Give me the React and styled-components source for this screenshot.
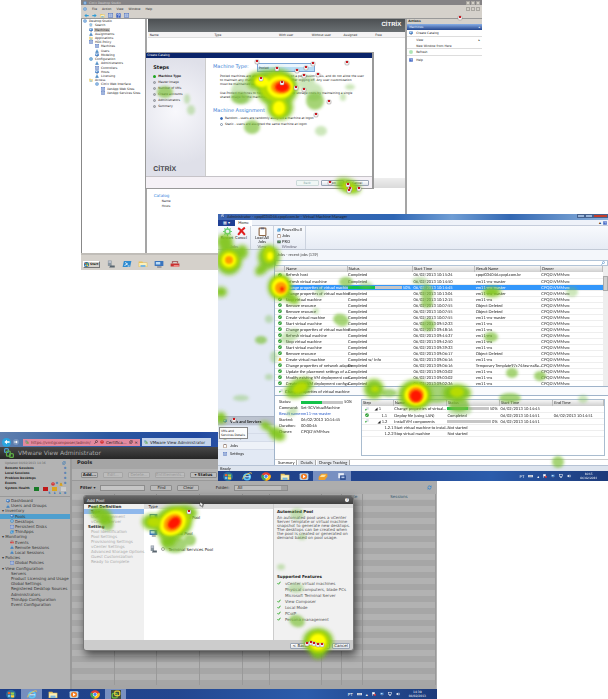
import React from 'react';
import styled, { createGlobalStyle, css } from 'styled-components';

const GlobalStyle = createGlobalStyle`
  *, *::before, *::after { box-sizing: border-box; }
  body { margin: 0; background: #fff; text-rendering: geometricPrecision; }
  button, input, select { font: inherit; color: inherit; margin: 0; padding: 0; border: 0; background: none; min-width: 0; }
  ul { list-style: none; margin: 0; padding: 0; }
  a { color: inherit; text-decoration: none; }
  h2, h3, p { margin: 0; font: inherit; }
  svg { display: block; flex: none; }
`;

/* ---------- board ---------- */
const Board = styled.main`
  display: grid;
  grid-template-columns: 81fr 137fr 219fr 45fr 126fr;
  grid-template-rows: 214px 56px 162px 49px auto;
  min-height: 100vh;
`;
const Shot = styled.section`
  position: relative;
  display: flex;
  flex-direction: column;
  min-width: 0;
  overflow: hidden;
  white-space: nowrap;
  grid-area: ${(p) => p.$area};
  z-index: ${(p) => p.$z};
  font: ${(p) => p.$font};
  color: #222;
`;
const Spacer = styled.span`flex: 1;`;

/* ---------- small drawings ---------- */
const shapes = {
  orb: <><circle cx="8" cy="8" r="8" fill="#2a6f9c" /><path d="M3 4q2-1 4 0v3.500q-2-1-4 0z" fill="#f0622b" /><path d="M8 4q3 1 5 0v4q-2 1-5 0z" fill="#9bd14b" /><path d="M3 9q2-1 4 0v4q-2-1-4 0z" fill="#6fc1f5" /><path d="M8 9q3 1 5 0v4q-2 1-5 0z" fill="#ffd23c" /></>,
  ie: <><circle cx="8" cy="8.500" r="5" fill="none" stroke="#5cc3f4" strokeWidth="3" /><path d="M4 8.500h9" stroke="#c7ecff" strokeWidth="2" /><path d="M1 13Q0 9 8 4t7-1" fill="none" stroke="#f3c845" strokeWidth="1.500" /></>,
  folder: <><path d="M1 3h6l1 2h7v9H1z" fill="#e8c25c" /><path d="M2 6h12v7H2z" fill="#fbf0bb" /><path d="M4 10h8v4H4z" fill="#79b7de" /></>,
  media: <><rect x="1" y="2" width="14" height="12" rx="2" fill="#b8d4e8" /><circle cx="8" cy="8" r="5" fill="#f07b22" /><path d="M6.500 5l4 3-4 3z" fill="#fff" /></>,
  chrome: <><circle cx="8" cy="8" r="7.500" fill="#e13d31" /><path d="M8 8L1.500 4.500A7.500 7.500 0 008 15.500z" fill="#3aa757" /><path d="M8 8l-1 7.500A7.500 7.500 0 0015 5z" fill="#fbc116" /><circle cx="8" cy="8" r="3.500" fill="#fff" /><circle cx="8" cy="8" r="2.600" fill="#4285f4" /></>,
  tray: <><path d="M1 9l4-6h10v5l-4 6H1z" fill="#f0a02b" /><path d="M3 9l3-4h7l-3 4z" fill="#ffe29a" /></>,
  vmm: <><rect x="2" y="2" width="9" height="9" fill="#e8edf7" /><rect x="5" y="6" width="9" height="8" fill="#2a4b8f" /><rect x="7" y="8" width="5" height="3" fill="#b5c7ea" /></>,
  vm: <><rect x="0" y="0" width="16" height="16" fill="#3f4d3f" /><rect x="2" y="6" width="8" height="8" rx="2" fill="none" stroke="#6cc044" strokeWidth="2" /><rect x="6" y="2" width="8" height="8" rx="2" fill="none" stroke="#e3c93a" strokeWidth="2" /></>,
  logo: <><rect x="1" y="1" width="6" height="6" rx="1.500" fill="none" stroke="#4d9ad0" strokeWidth="2" /><rect x="4" y="5" width="6" height="8" rx="1.500" fill="none" stroke="#5dab46" strokeWidth="2" /><rect x="9" y="9" width="6" height="6" rx="1.500" fill="none" stroke="#5dab46" strokeWidth="2" /></>,
  server: <><path d="M3 1h6v11H3z" fill="#8b97a0" /><path d="M4 3h4M4 5h4" stroke="#dde" /><path d="M7 11h7v4H5z" fill="#59656e" /></>,
  shell: <><path d="M3 2h12l-2 12H1z" fill="#2f8bd0" /><path d="M5 5l4 3-5 3M9 12h3" fill="none" stroke="#fff" strokeWidth="1.500" /></>,
  screen: <><rect x="1" y="2" width="14" height="10" rx="1" fill="#3a74bd" /><rect x="3" y="4" width="7" height="5" fill="#bcdcf7" /><path d="M5 14h7" stroke="#667" strokeWidth="2" /></>,
  redbox: <><path d="M1 7h14v6H1z" fill="#c93030" /><path d="M4 7V3h8v4" fill="none" stroke="#a66" strokeWidth="2" /><path d="M6 10h8v4H6z" fill="#ea8a84" /></>,
  globe: <><circle cx="8" cy="8" r="7" fill="#4a88cc" /><path d="M3 5q5 4 10 0M3 11q5-4 10 0M8 1v14" fill="none" stroke="#d5eaf9" strokeWidth="1.500" /></>,
  search: <><path d="M3 1h9v13H3z" fill="#e9f2fa" stroke="#9ab" /><circle cx="7" cy="7" r="4" fill="#b8def5" stroke="#5a9bc9" strokeWidth="2" /></>,
  user: <><circle cx="8" cy="5" r="3.500" fill="#6ba7db" /><path d="M1 15q0-7 7-7t7 7z" fill="#3c7dbb" /></>,
  list: <><rect x="1" y="1" width="14" height="13" fill="#d8e4f6" stroke="#5575bd" strokeWidth="2" /><path d="M4 5h8M4 8h8M4 11h8" stroke="#5575bd" strokeWidth="1.500" /></>,
  disc: <><circle cx="8" cy="8" r="7" fill="#3d88c4" /><circle cx="8" cy="8" r="3" fill="#e7f4ff" /></>,
  ok: <><circle cx="8" cy="8" r="7.500" fill="#249a2c" /><path d="M4 8l3 3 5-6" fill="none" stroke="#fff" strokeWidth="2.500" /></>,
  warn: <><path d="M8 1l7.500 14H.5z" fill="#f0b51e" /><path d="M8 5v5M8 12v2" stroke="#5a3a00" strokeWidth="2" /></>,
  run: <><rect x="5" y="1" width="10" height="10" fill="#d8dee6" /><path d="M1 7l8 4-8 4z" fill="#35a83c" /></>,
  gear: <><circle cx="8" cy="8" r="4.500" fill="none" stroke="#6fd07a" strokeWidth="2.500" /><path d="M8 0v4M8 12v4M0 8h4M12 8h4M2.500 2.500l2.500 2.500M11 11l2.500 2.500M13.500 2.500L11 5M5 11l-2.500 2.500" stroke="#6fd07a" strokeWidth="2" /></>,
  cross: <path d="M2 2q5 3 12 12M14 1Q8 5 2 14" fill="none" stroke="#df1f1f" strokeWidth="3.500" />,
  clip: <><rect x="2" y="2" width="12" height="13" rx="1" fill="#fff" stroke="#8d6748" strokeWidth="2" /><path d="M5 1h6v3H5z" fill="#667" /></>,
  pro: <><rect x="1" y="2" width="14" height="11" fill="#40604d" /><path d="M3 8h4l2-3 4 5" fill="none" stroke="#8fe09a" strokeWidth="2" /></>,
  help: <><rect x="1" y="1" width="14" height="14" rx="1" fill="#3d63c4" /><path d="M5 6q0-3 3-3t3 3-3 3v1M8 12v2" fill="none" stroke="#fff" strokeWidth="2" /></>,
  refresh: <><path d="M3 9a5 5 0 019-4M13 7a5 5 0 01-9 4" fill="none" stroke="currentColor" strokeWidth="2.500" /><path d="M14 1v5H9zM2 15v-5h5z" fill="currentColor" /></>,
  back: <path d="M1 8l7-6v4h7v4H8v4z" fill="currentColor" />,
  forward: <path d="M15 8L8 2v4H1v4h7v4z" fill="currentColor" />,
  check: <path d="M2 9l4 4 8-10" fill="none" stroke="#33ab2a" strokeWidth="4" />,
  keyboard: <><rect x="0" y="4" width="16" height="9" fill="#d8dfec" /><path d="M2 7h12M3 10h10" stroke="#445" strokeDasharray="2 1" /></>,
  flag: <><path d="M2 1v14M2 2h8v6H2" stroke="#fff" strokeWidth="2" fill="#fff" /><circle cx="11" cy="11" r="4.500" fill="#d92323" /><path d="M9 9l4 4M13 9l-4 4" stroke="#fff" /></>,
  net: <><rect x="2" y="2" width="12" height="8" fill="none" stroke="#fff" strokeWidth="2" /><path d="M8 10v4M4 14h8" stroke="#fff" strokeWidth="2" /></>,
  sound: <><path d="M1 6h3l5-4v12l-5-4H1z" fill="#fff" /><path d="M11 5q2 3 0 6M13 3q3 5 0 10" fill="none" stroke="#fff" strokeWidth="1.500" /></>,
  warnred: <><circle cx="8" cy="8" r="7" fill="#cf1f1f" /><path d="M8 3v6M8 11v2" stroke="#fff" strokeWidth="2" /></>,
  zoom: <><circle cx="10" cy="6" r="4" fill="none" stroke="currentColor" strokeWidth="2" /><path d="M7 9l-5 6" stroke="currentColor" strokeWidth="2.500" /></>,
};
const Glyph = ({ name, size = 4, w }) => (
  <svg width={w || size} height={size} viewBox="0 0 16 16" preserveAspectRatio="none" aria-hidden="true">{shapes[name]}</svg>
);

/* ---------- heat overlay ---------- */
const HeatLayer = styled.svg`
  position: absolute;
  inset: 0;
  width: 100%;
  height: 100%;
  pointer-events: none;
`;
const tones = [
  { key: 'faint', fill: '#7cc04e', opacity: 0.38, blur: 1.5 },
  { key: 'mid', fill: '#7cc035', opacity: 0.68, blur: 1.5 },
  { key: 'green', fill: '#7ec412', opacity: 0.92, blur: 2 },
  { key: 'lime', fill: '#b9dd00', opacity: 0.95, blur: 1.7 },
  { key: 'yellow', fill: '#ffff00', opacity: 1, blur: 1.3 },
  { key: 'orange', fill: '#ff9a00', opacity: 1, blur: 1.3 },
  { key: 'red', fill: '#ff1500', opacity: 1, blur: 1.3 },
];
const Heat = ({ id, box, spots, clicks = [], pointer }) => (
  <HeatLayer viewBox={box} preserveAspectRatio="none" aria-hidden="true">
    {pointer && <path transform={`translate(${pointer})`} d="M0 0l4 3H2l1 2H2L1 3.500 0 4z" fill="#fff" stroke="#333" strokeWidth=".5" />}
    {tones.map((t) => (
      <g key={t.key} filter={`url(#${id}-${t.key})`} opacity={t.opacity} fill={t.fill}>
        {(spots[t.key] || []).map(([x, y, rx, ry, r = 0], i) => (
          <ellipse key={i} cx={x} cy={y} rx={rx} ry={ry} transform={`rotate(${r} ${x} ${y})`} />
        ))}
      </g>
    ))}
    <defs>
      {tones.map((t) => (
        <filter key={t.key} id={`${id}-${t.key}`} x="-50%" y="-50%" width="200%" height="200%">
          <feGaussianBlur stdDeviation={t.blur} />
        </filter>
      ))}
    </defs>
    {clicks.map(([x, y], i) => (
      <g key={i}>
        <rect x={x - 2} y={y - 2} width="4" height="4" rx="1" fill="#f6f1f1" stroke="#8c8888" strokeWidth=".5" />
        <rect x={x - 1} y={y - 2} width="2" height="2" fill="#c8141c" />
      </g>
    ))}
  </HeatLayer>
);

const citrixHeat = {
  faint: [[307, 83, 8, 8], [321, 131, 6, 5], [343, 97, 3, 4], [350, 87, 5, 3], [191, 110, 4, 5], [187, 99, 3, 5], [243, 92, 12, 12], [314, 92, 9, 9]],
  mid: [[165, 92, 8, 6], [240, 98, 9, 6], [252, 127, 8, 7], [315, 101, 9, 9]],
  green: [[277, 88, 21, 19], [280, 107, 13, 13], [256, 81, 9, 9], [266, 76, 10, 6], [348, 186, 13, 7, 20]],
  lime: [[277, 87, 17, 14], [279, 108, 9, 10], [259, 81, 6, 6], [349, 187, 7, 4, 20]],
  yellow: [[280, 87, 13, 11], [279, 108, 6, 7], [262, 82, 7, 5]],
  orange: [[281, 87, 10, 7]],
  red: [[282, 87, 7, 5]],
};
const citrixClicks = [[313, 64], [347, 63], [257, 62], [306, 68], [297, 71], [277, 69], [304, 76], [318, 75], [261, 79], [282, 83], [296, 88], [304, 90], [329, 102], [316, 115], [460, 18], [330, 183], [348, 185], [350, 189], [359, 189], [349, 191]];
const vmmHeat = {
  faint: [[366, 285, 7, 4], [320, 292, 5, 5], [420, 281, 8, 4], [269, 319, 4, 4], [316, 311, 3, 3], [290, 336, 11, 6, -30], [269, 377, 4, 3], [241, 398, 8, 3], [583, 399, 5, 4], [460, 410, 12, 6], [274, 357, 4, 6], [572, 292, 6, 5], [292, 412, 6, 4, -30]],
  mid: [[346, 282, 7, 5], [261, 340, 6, 4], [427, 293, 6, 9], [427, 303, 6, 5], [428, 325, 7, 6], [491, 337, 7, 5], [512, 373, 6, 5], [540, 376, 6, 5], [510, 398, 11, 5], [558, 462, 6, 6], [341, 320, 8, 6, 20], [459, 405, 10, 7], [389, 393, 8, 4], [436, 393, 18, 10]],
  green: [[229, 260, 13, 15], [225, 242, 8, 8], [242, 252, 6, 7], [269, 257, 11, 12], [262, 269, 8, 5, -40], [280, 287, 12, 13], [291, 298, 9, 5, 30], [221, 292, 6, 5], [492, 292, 9, 5], [299, 388, 15, 9, -25], [374, 389, 10, 10], [415, 395, 17, 15], [457, 393, 14, 9], [221, 418, 5, 6], [266, 426, 6, 4, 30], [277, 434, 9, 6, 30]],
  lime: [[229, 260, 10, 10], [269, 255, 6, 8], [280, 287, 10, 11], [300, 388, 8, 5, -25], [375, 389, 4, 3], [416, 395, 13, 12], [457, 392, 7, 5]],
  yellow: [[229, 260, 7, 7], [270, 256, 3, 4], [280, 287, 8, 9], [416, 395, 11, 10]],
  orange: [[229, 260, 4, 4], [281, 288, 6, 6, 30], [416, 395, 8, 8]],
  red: [[282, 289, 2, 2], [416, 396, 6, 6]],
};
const viewHeat = {
  faint: [[297, 514, 7, 6], [302, 537, 4, 3], [281, 567, 4, 3], [296, 588, 8, 5]],
  mid: [[107, 524, 7, 6, 40], [175, 545, 12, 8], [297, 621, 8, 6, 20], [190, 540, 6, 6]],
  green: [[101, 514, 11, 7, 20], [105, 519, 8, 6], [173, 523, 20, 17, -25], [152, 522, 10, 8], [184, 513, 13, 8], [168, 541, 8, 6], [318, 641, 15, 13], [318, 650, 8, 9]],
  lime: [[174, 522, 17, 13, -30], [154, 522, 7, 5], [318, 642, 11, 11]],
  yellow: [[173, 523, 14, 11, -40], [318, 642, 8, 8]],
  orange: [[173, 523, 10, 8, -40]],
  red: [[174, 523, 7, 5, -40]],
};
const viewClicks = [[189, 512], [307, 644], [311, 643], [314, 644], [318, 645], [322, 645]];

/* ---------- taskbars ---------- */
const DarkTaskbar = styled.footer`
  height: 10px;
  flex: none;
  display: flex;
  align-items: center;
  color: #fff;
  background: linear-gradient(90deg, #1e3f86, #23468f 40%, #2b5cab 70%, #1c3a7a);
`;
const TaskButton = styled.button`
  display: flex;
  justify-content: center;
  align-items: center;
  flex: 0 1 ${(p) => p.$pitch}px;
  height: 10px;
  background: ${(p) => (p.$on ? 'rgba(205,220,245,.5)' : 'none')};
`;
const Tray = styled.div`
  display: flex;
  align-items: center;
  gap: 4px;
  padding-right: 11px;
`;
const Clock = styled.time`
  font-size: 3px;
  line-height: 4px;
  text-align: center;
  white-space: pre-line;
  padding-left: 5px;
`;
const WinTaskbar = ({ items, active, clock, pitch }) => (
  <DarkTaskbar>
    {items.map((n) => <TaskButton key={n} $pitch={pitch} $on={active.includes(n)} aria-label={n}><Glyph name={n} size={9} w={10} /></TaskButton>)}
    <Spacer />
    <Tray>
      <span>PT</span><Glyph name="keyboard" size={4} w={5} /><span>▴</span>
      <Glyph name="flag" /><Glyph name="screen" /><Glyph name="net" /><Glyph name="sound" />
      <Clock>{clock}</Clock>
    </Tray>
  </DarkTaskbar>
);

/* ---------- Citrix Desktop Studio ---------- */
const StudioTitle = styled.header`
  height: 5px;
  display: flex;
  align-items: center;
  gap: 2px;
  padding: 0 2px;
  background: #858385;
  color: #d4d4d4;
`;
const CaptionButtons = styled.span`
  display: flex;
  gap: 1px;
  i { width: 4px; height: 4px; background: #d4d0c8; border: 1px solid #a9a6a0; }
`;
const StudioMenu = styled.nav`
  height: 7px;
  display: flex;
  align-items: center;
  gap: 5px;
  padding: 0 2px;
  background: #d5d1cb;
`;
const StudioTools = styled.div`
  height: 7px;
  display: flex;
  align-items: center;
  gap: 3px;
  padding: 0 3px;
  background: #d5d1cb;
  border-bottom: 1px solid #999;
  color: #2f9cd6;
`;
const StudioBody = styled.div`
  display: grid;
  grid-template-columns: 65fr 261fr 75fr;
  height: 234px;
  background: #fff;
  border-left: 1px solid #888;
`;
const Tree = styled.ul`
  border-right: 2px solid #a5a5a5;
  display: grid;
  grid-template-rows: repeat(18, 1fr) 158px;
  overflow: hidden;
`;
const TreeItem = styled.li`
  display: flex;
  align-items: center;
  gap: 1px;
  padding-left: ${(p) => p.$depth * 6 + 1}px;
  a { padding: 0 1px; background: ${(p) => (p.$on ? '#ccc8c2' : 'none')}; }
`;
const StudioMain = styled.div`
  display: flex;
  flex-direction: column;
  border-right: 2px solid #a5a5a5;
  padding-left: 1px;
`;
const Banner = styled.div`
  height: 13px;
  display: flex;
  align-items: center;
  justify-content: flex-end;
  padding-right: 4px;
  background: linear-gradient(#4c5053, #6b7073);
`;
const CitrixMark = styled.strong`
  font: 700 ${(p) => p.$size}px/9px "Liberation Sans", sans-serif;
  color: ${(p) => p.$color};
`;
const ColumnHeads = styled.div`
  height: 6px;
  display: grid;
  grid-template-columns: 65fr 65fr 33fr 32fr 32fr 30fr;
  align-items: center;
  padding-left: 2px;
  background: #f4f3f4;
  border-bottom: 1px solid #ddd;
`;
const Divider = styled.div`
  margin-top: 140px;
  height: 10px;
  background: linear-gradient(#eee, #dadada);
`;
const Details = styled.div`
  padding: 5px 6px;
  line-height: 5px;
  h3 { color: #2f7fdc; font-size: 4px; line-height: 6px; }
  p { padding-left: 8px; }
`;
const ActionPane = styled.aside`
  h3 { height: 5px; line-height: 5px; padding-left: 1px; background: #d5d1cb; font-weight: 700; }
  h2 { height: 6px; line-height: 6px; padding: 0 2px; color: #e8f1ff; background: linear-gradient(#88aee6, #24468e); display: flex; justify-content: space-between; }
`;
const ActionItem = styled.button`
  display: flex;
  align-items: center;
  gap: 3px;
  width: 100%;
  height: ${(p) => (p.$plain ? 6 : 7)}px;
  padding: 0 2px 0 ${(p) => (p.$plain ? 9 : 2)}px;
  border-bottom: ${(p) => (p.$line ? '1px solid #ddd' : '0')};
`;
const LightTaskbar = styled.footer`
  display: flex;
  align-items: center;
  gap: 6px;
  height: 17px;
  padding: 3px 0 0 2px;
  background: #d5d1cb;
  border-top: 2px solid #c0bdb8;
`;
const StartButton = styled.button`
  display: flex;
  align-items: center;
  gap: 1px;
  width: 17px;
  height: 7px;
  font-weight: 700;
  border: 1px solid;
  border-color: #fff #777 #777 #fff;
`;

const Wizard = styled.section`
  position: absolute;
  top: 52px;
  left: 16%;
  width: 57%;
  height: 137px;
  display: flex;
  flex-direction: column;
  background: #fff;
  border: 1px solid #999;
  border-right-width: 2px;
`;
const WizardTitle = styled.h2`height: 5px; line-height: 5px; background: #0a246a; color: #fff; padding-left: 1px;`;
const WizardBody = styled.div`
  display: grid;
  grid-template-columns: 60fr 166fr;
  height: 119px;
  border-bottom: 1px solid #c6c3c8;
`;
const Steps = styled.ol`
  margin: 0;
  padding: 7px 0 2px 7px;
  display: flex;
  flex-direction: column;
  list-style: none;
  border-right: 1px solid #ccc;
  background: radial-gradient(circle at 50% 45%, #f8f8fc, #dfe0e9 75%);
  h3 { font-size: 5px; line-height: 6px; font-weight: 700; margin-bottom: 2px; }
`;
const Step = styled.li`
  display: flex;
  align-items: center;
  gap: 2px;
  height: 6px;
  font-weight: ${(p) => (p.$on ? 700 : 400)};
  &::before { content: ''; width: 3px; height: 3px; border-radius: 2px; background: ${(p) => (p.$on ? '#1da51d' : '#b9bbc2')}; border: ${(p) => (p.$on ? 0 : '1px solid #90949c')}; }
`;
const WizardForm = styled.form`
  padding: 5px 6px 0 7px;
  h3 { color: #3a7fd5; font-size: 5px; line-height: 6px; margin-bottom: 1px; }
`;
const TypeRow = styled.label`
  display: flex;
  align-items: flex-start;
  gap: 8px;
  color: #3a7fd5;
  font-size: 5px;
  line-height: 8px;
  height: 11px;
`;
const TypeSelect = styled.select`
  width: 38%;
  height: 9px;
  font-size: 3px;
  color: #222;
  border: 1px solid #7da7d8;
  background: linear-gradient(#eaf5fd 50%, #b7dcf4 50%);
  appearance: none;
  padding-left: 1px;
`;
const Para = styled.p`white-space: pre; line-height: 4px; padding-left: 7px; height: 17px;`;
const RadioRow = styled.label`
  display: flex;
  align-items: center;
  gap: 2px;
  height: 6px;
  padding-left: 7px;
  input { appearance: none; width: 3px; height: 3px; border: 1px solid #8494aa; border-radius: 2px; }
  input:checked { background: #3169b8; border-color: #3169b8; }
`;
const WizardFooter = styled.div`
  flex: 1;
  display: flex;
  align-items: center;
  justify-content: flex-end;
  gap: 2px;
  padding-right: 3px;
  background: #f5f1f6;
`;
const PushButton = styled.button`
  width: ${(p) => p.$w || 23}px;
  height: 6px;
  line-height: 4px;
  border: 1px solid #9aa5b5;
  border-radius: 1px;
  background: linear-gradient(#fff, #dde3ea);
  text-align: center;
  &:disabled { color: #8aa; border-color: #ccd9d9; background: #f0f7f5; }
`;

const tree = [
  [0, 'globe', 'Desktop Studio'], [1, 'search', 'Search'], [1, 'screen', 'Machines', true], [1, 'user', 'Assignments'],
  [1, 'folder', 'Applications'], [1, 'list', 'HDX Policy'], [2, 'list', 'Machines'], [2, 'user', 'Users'], [2, 'screen', 'Modeling'],
  [1, 'disc', 'Configuration'], [2, 'user', 'Administrators'], [2, 'list', 'Controllers'], [2, 'screen', 'Hosts'], [2, 'user', 'Licensing'],
  [1, 'folder', 'Access'], [2, 'globe', 'Citrix Web Interface'], [3, 'list', 'XenApp Web Sites'], [3, 'list', 'XenApp Services Sites'],
];

const Studio = () => (
  <Shot $area="1 / 2 / 3 / 5" $z={1} $font='3px/4px "DejaVu Sans", sans-serif'>
    <StudioTitle><Glyph name="globe" /><span>Citrix Desktop Studio</span><Spacer /><CaptionButtons><i /><i /><i /></CaptionButtons></StudioTitle>
    <StudioMenu><Glyph name="globe" />{['File', 'Action', 'View', 'Window', 'Help'].map((m) => <a href="#" key={m}>{m}</a>)}<Spacer /><CaptionButtons><i /><i /><i /></CaptionButtons></StudioMenu>
    <StudioTools><Glyph name="back" size={5} /><Glyph name="forward" size={5} /><Glyph name="folder" size={5} /><Glyph name="list" size={5} /><Glyph name="help" size={5} /><Glyph name="list" size={5} /></StudioTools>
    <StudioBody>
      <Tree>{tree.map(([d, g, t, on], i) => <TreeItem key={i} $depth={d} $on={on}><Glyph name={g} /><a href="#">{t}</a></TreeItem>)}</Tree>
      <StudioMain>
        <Banner><CitrixMark $color="#fff" $size={6}>CİTRİX</CitrixMark></Banner>
        <ColumnHeads>{['Name', 'Type', 'With user', 'Without user', 'Assigned', 'Free'].map((c) => <span key={c}>{c}</span>)}</ColumnHeads>
        <Divider />
        <Details><h3>Catalog</h3><p>Name</p><p>Hosts</p></Details>
      </StudioMain>
      <ActionPane>
        <h3>Actions</h3>
        <h2><span>Machines</span><span>▴</span></h2>
        <ActionItem $line><Glyph name="screen" />Create Catalog</ActionItem>
        <ActionItem $plain>View<Spacer />▸</ActionItem>
        <ActionItem $plain $line>New Window from Here</ActionItem>
        <ActionItem $line><Glyph name="gear" />Refresh</ActionItem>
        <ActionItem><Glyph name="help" />Help</ActionItem>
      </ActionPane>
    </StudioBody>
    <LightTaskbar>
      <StartButton><Glyph name="orb" size={5} />Start</StartButton>
      {['server', 'shell', 'folder', 'screen', 'redbox'].map((n) => <Glyph key={n} name={n} size={8} w={10} />)}
    </LightTaskbar>
    <Wizard>
      <WizardTitle>Create Catalog</WizardTitle>
      <WizardBody>
        <Steps>
          <h3>Steps</h3>
          {['Machine Type', 'Master Image', 'Number of VMs', 'Create accounts', 'Administrators', 'Summary'].map((s, i) => <Step key={s} $on={i === 0}>{s}</Step>)}
          <Spacer />
          <CitrixMark $color="#4a4a4e" $size={7}>CİTRİX</CitrixMark>
        </Steps>
        <WizardForm>
          <TypeRow>Machine Type:<TypeSelect defaultValue="Pooled"><option>Pooled</option></TypeSelect></TypeRow>
          <Para>{'Pooled machines are always provided to users on a per-session basis, and do not allow the user\nto maintain any changes made to the desktop after logging off. Any user customization\nmust be maintained separately.'}</Para>
          <Para>{'Use Pooled machines to help reduce your desktop storage costs by maintaining a single\nshared image for the machines.'}</Para>
          <h3>Machine Assignment</h3>
          <RadioRow><input type="radio" name="assign" defaultChecked />Random - users are randomly assigned a machine at logon</RadioRow>
          <RadioRow><input type="radio" name="assign" />Static - users are assigned the same machine at logon</RadioRow>
        </WizardForm>
      </WizardBody>
      <WizardFooter><PushButton disabled>Back</PushButton><PushButton>Next</PushButton><PushButton>Cancel</PushButton></WizardFooter>
    </Wizard>
    <Heat id="studio" box="81 0 401 270" spots={citrixHeat} clicks={citrixClicks} />
  </Shot>
);

/* ---------- Virtual Machine Manager ---------- */
const AeroTitle = styled.header`
  height: 6px;
  display: flex;
  align-items: flex-start;
  gap: 2px;
  padding-left: 3px;
  background: linear-gradient(90deg, #3c64b0, #2e66b4 45%, #6f9dd4 60%, #3368b3 75%, #8db3dd);
`;
const AeroButton = styled.button`
  width: ${(p) => (p.$close ? 15 : 8)}px;
  height: 4px;
  line-height: 4px;
  border: 1px solid #45618e;
  background: ${(p) => (p.$close ? '#c43d2b' : '#9bb5d8')};
  & + & { margin-left: -2px; }
`;
const RibbonTabs = styled.nav`
  height: 6px;
  display: flex;
  align-items: center;
  background: #eef2f9;
  border-bottom: 1px solid #c5cddb;
  padding-right: 1px;
`;
const RibbonTab = styled.button`
  width: 17px;
  height: 6px;
  line-height: 5px;
  background: ${(p) => (p.$file ? '#1f3f94' : '#fff')};
  color: ${(p) => (p.$file ? '#fff' : '#333')};
`;
const Ribbon = styled.div`
  height: 24px;
  display: flex;
  background: linear-gradient(#f8fafd, #e6ebf4);
  border-bottom: 1px solid #c2cad6;
`;
const RibbonGroup = styled.div`
  display: grid;
  grid-template-rows: 18px 4px;
  padding: 1px 3px 0;
  border-right: 1px solid #ccd3df;
  text-align: center;
  line-height: 4px;
  & > span { color: #667; }
`;
const ToolRow = styled.div`display: flex; gap: 2px; align-items: flex-start;`;
const BigTool = styled.button`
  display: flex;
  flex-direction: column;
  align-items: center;
  width: ${(p) => p.$w || 12}px;
  line-height: 4px;
  white-space: normal;
`;
const SmallTools = styled.div`
  display: grid;
  grid-template-rows: repeat(3, 6px);
  button { display: flex; align-items: center; gap: 1px; text-align: left; }
`;
const ManagerBody = styled.div`
  display: grid;
  grid-template-columns: 56fr 334fr;
  height: 215px;
`;
const NavPane = styled.nav`
  display: flex;
  flex-direction: column;
  justify-content: flex-end;
  background: #e2e9f4;
  padding-bottom: 8px;
`;
const NavButton = styled.a`
  display: flex;
  align-items: center;
  gap: 3px;
  height: ${(p) => (p.$on ? 9 : 8)}px;
  padding-left: 5px;
  background: ${(p) => (p.$on ? '#bcc3cf' : p.$pale ? '#eef2f8' : 'none')};
  border-top: 1px solid ${(p) => (p.$on ? '#aab2c0' : '#d5dce9')};
  font-weight: ${(p) => (p.$on ? 700 : 400)};
`;
const Tooltip = styled.div`
  position: absolute;
  top: 213px;
  left: 1px;
  width: 29px;
  padding: 1px;
  font: 3px/4px "DejaVu Sans", sans-serif;
  white-space: normal;
  background: #fdfdfd;
  border: 1px solid #888;
`;
const WorkPane = styled.div`
  display: flex;
  flex-direction: column;
  min-width: 0;
  background: #fff;
  border-left: 1px solid #9fb3ca;
`;
const PaneTitle = styled.h2`height: 10px; line-height: 9px; padding-left: 2px; color: #444; background: #f4f7fb;`;
const SearchBox = styled.label`
  display: flex;
  align-items: center;
  height: 6px;
  border: 1px solid #b2c4d7;
  padding-right: 2px;
  color: #3b7fc0;
  input { flex: 1; height: 4px; }
`;
const TableWrap = styled.div`
  display: flex;
  height: 120px;
`;
const Grid = styled.table`
  flex: 1;
  table-layout: fixed;
  border-collapse: collapse;
  width: 100%;
  height: max-content;
  th { height: 6px; padding: 0 0 0 1px; text-align: left; font-weight: 400; line-height: 4px; background: linear-gradient(#f5f5f5, #cfcfcf); border-right: 1px solid #bbb; }
  td { height: 6px; padding: 0 0 0 1px; line-height: 5px; border-bottom: 1px solid #eee; }
  td:first-child svg { margin: 0 auto; }
`;
const JobRow = styled.tr`
  ${(p) => p.$on && css`background: #3397fb; color: #fff;`}
`;
const Meter = styled.span`
  display: flex;
  align-items: center;
  gap: 1px;
  padding-right: 2px;
  &::before { content: ''; flex: 1; height: 3px; background: linear-gradient(90deg, #15c24a ${(p) => p.$v}%, #c6c6c6 ${(p) => p.$v}%); }
`;
const Scrollbar = styled.div`
  width: 5px;
  background: #eee;
  padding-top: 10px;
  &::before { content: ''; display: block; height: 15px; border: 1px solid #aaa; background: #d0d0d0; }
`;
const JobTitle = styled.h2`
  display: flex;
  align-items: center;
  gap: 2px;
  height: 10px;
  padding-left: 4px;
  background: #fafbfd;
  border-top: 1px solid #9fb3ca;
  border-bottom: 1px solid #9fb3ca;
`;
const JobDetail = styled.div`
  display: grid;
  grid-template-columns: 87fr 247fr;
  height: 63px;
  padding: 3px 3px 3px 0;
`;
const Facts = styled.dl`
  margin: 0;
  padding: 0 7px 0 4px;
  display: grid;
  grid-template-columns: 22px 1fr;
  grid-auto-rows: 6px;
  line-height: 6px;
  dd { margin: 0; }
  .link { color: #2458c8; }
`;
const StepBox = styled.div`border: 1px solid #a9bccf;`;
const StepCell = styled.span`display: flex; padding-left: ${(p) => p.$in}px;`;
const BottomTabs = styled.div`
  display: flex;
  height: 6px;
  gap: 1px;
  padding-left: 1px;
  border-top: 1px solid #ccc;
  button { padding: 0 2px; line-height: 5px; background: #e8ebf0; border-right: 1px solid #aaa; }
  button:first-child { background: #fff; }
`;
const StatusLine = styled.div`height: 6px; line-height: 5px; padding-left: 2px; background: #dde4ee; border-top: 1px solid #b5c2d4;`;

const C = 'Completed';
const jobs = [
  ['ok', 'Refresh host', C, '10:15:24', 'cpqd034046.cpqd.com.br'], ['ok', 'Refresh virtual machine', C, '10:14:50', 'vm11-ms-master'],
  ['run', 'Change properties of virtual machine', 50, '10:14:45', 'vm11-ms-master'], ['ok', 'Change properties of virtual machine', C, '10:13:04', 'vm11-ms-master'],
  ['ok', 'Stop virtual machine', C, '10:12:15', 'vm11-ms'], ['ok', 'Remove resource', C, '10:07:55', 'Object Deleted'],
  ['ok', 'Remove resource', C, '10:07:55', 'Object Deleted'], ['ok', 'Create virtual machine', C, '10:07:55', 'vm11-ms-master'],
  ['ok', 'Start virtual machine', C, '09:52:33', 'vm11-ms'], ['ok', 'Change properties of virtual machine', C, '09:48:16', 'vm11-ms'],
  ['ok', 'Refresh virtual machine', C, '09:44:37', 'vm11-ms'], ['ok', 'Stop virtual machine', C, '09:42:50', 'vm11-ms'],
  ['ok', 'Start virtual machine', C, '09:39:33', 'vm11-ms'], ['ok', 'Remove resource', C, '09:06:17', 'Object Deleted'],
  ['warn', 'Create virtual machine', 'Completed w/ Info', '09:06:16', 'vm11-ms'], ['ok', 'Change properties of network adapter', C, '09:06:16', 'Temporary Template97c746ea-ea8a...'],
  ['ok', 'Update the placement settings of a...', C, '09:03:02', 'vm11-ms'], ['ok', 'Modify existing VM deployment con...', C, '09:03:02', 'vm11-ms'],
  ['ok', 'Create new VM deployment configu...', C, '09:02:36', 'vm11-ms'],
];
const jobSteps = [
  ['run', 2, '◢ 1', 'Change properties of virtual...', 50, '06/02/2013 10:14:45', ''],
  ['ok', 9, '1.1', 'Deploy file (using LAN)', C, '06/02/2013 10:14:51', '06/02/2013 10:14:51'],
  ['run', 5, '◢ 1.2', 'Install VM components', 0, '06/02/2013 10:14:51', ''],
  [null, 12, '1.2.1', 'Start virtual machine to instal...', 'Not started', '', ''],
  [null, 12, '1.2.2', 'Stop virtual machine', 'Not started', '', ''],
];
const Status = ({ v }) => (typeof v === 'number' ? <Meter $v={v}>{v}%</Meter> : v);

const Manager = () => (
  <Shot $area="2 / 3 / 5 / 6" $z={3} $font='4px/5px "Lato", sans-serif'>
    <AeroTitle><Glyph name="vmm" /><span>Administrator - cpqd034046.cpqd.com.br - Virtual Machine Manager</span><Spacer /><AeroButton aria-label="Minimize" /><AeroButton aria-label="Maximize" /><AeroButton $close aria-label="Close" /></AeroTitle>
    <RibbonTabs><RibbonTab $file>▦ ▾</RibbonTab><RibbonTab>Home</RibbonTab><Spacer /><span>▴</span>&nbsp;&nbsp;<Glyph name="help" /></RibbonTabs>
    <Ribbon>
      <RibbonGroup><ToolRow><BigTool><Glyph name="gear" size={9} />Restart</BigTool><BigTool><Glyph name="cross" size={9} />Cancel</BigTool></ToolRow><span>Jobs</span></RibbonGroup>
      <RibbonGroup><ToolRow><BigTool $w={16}><Glyph name="clip" size={9} />Load All Jobs</BigTool></ToolRow><span>View</span></RibbonGroup>
      <RibbonGroup><SmallTools><button><Glyph name="shell" />PowerShell</button><button><Glyph name="clip" />Jobs</button><button><Glyph name="pro" />PRO</button></SmallTools><span>Window</span></RibbonGroup>
    </Ribbon>
    <ManagerBody>
      <NavPane>
        <NavButton href="#" $on><Glyph name="screen" />VMs and Services</NavButton>
        <NavButton href="#"><Glyph name="folder" />Fabric</NavButton>
        <NavButton href="#"><Glyph name="folder" />Library</NavButton>
        <NavButton href="#" $pale><Glyph name="clip" />Jobs</NavButton>
        <NavButton href="#"><Glyph name="list" />Settings</NavButton>
      </NavPane>
      <WorkPane>
        <PaneTitle>Jobs - recent jobs (139)</PaneTitle>
        <SearchBox><input aria-label="Search jobs" /><Glyph name="zoom" /></SearchBox>
        <TableWrap>
          <Grid>
            <colgroup><col width="3%" /><col width="19%" /><col width="20%" /><col width="19%" /><col width="20%" /><col width="19%" /></colgroup>
            <thead><tr><th /><th>Name</th><th>Status</th><th>Start Time</th><th>Result Name</th><th>Owner</th></tr></thead>
            <tbody>{jobs.map(([g, n, s, t, r], i) => (
              <JobRow key={i} $on={i === 2}><td><Glyph name={g} /></td><td>{n}</td><td><Status v={s} /></td><td>06/02/2013 {t}</td><td>{r}</td><td>CPQD\VMMsvc</td></JobRow>
            ))}</tbody>
          </Grid>
          <Scrollbar />
        </TableWrap>
        <JobTitle><Glyph name="run" />Change properties of virtual machine</JobTitle>
        <JobDetail>
          <Facts>
            <dt>Status:</dt><dd><Meter $v={50}>50%</Meter></dd>
            <dt>Command:</dt><dd>Set-SCVirtualMachine</dd>
            <dt className="link">Result name:</dt><dd className="link">vm11-ms-master</dd>
            <dt>Started:</dt><dd>06/02/2013 10:14:45</dd>
            <dt>Duration:</dt><dd>00:00:46</dd>
            <dt>Owner:</dt><dd>CPQD\VMMsvc</dd>
          </Facts>
          <StepBox>
            <Grid>
              <colgroup><col width="4%" /><col width="9%" /><col width="22%" /><col width="22%" /><col width="22%" /><col width="21%" /></colgroup>
              <thead><tr><th colSpan="2">Step</th><th>Name</th><th>Status</th><th>Start Time</th><th>End Time</th></tr></thead>
              <tbody>{jobSteps.map(([g, pad, n, name, s, a, b]) => (
                <tr key={n}><td>{g && <Glyph name={g} />}</td><td><StepCell $in={pad}>{n}</StepCell></td><td>{name}</td><td><Status v={s} /></td><td>{a}</td><td>{b}</td></tr>
              ))}</tbody>
            </Grid>
          </StepBox>
        </JobDetail>
        <BottomTabs><button>Summary</button><button>Details</button><button>Change Tracking</button></BottomTabs>
      </WorkPane>
    </ManagerBody>
    <StatusLine>Ready</StatusLine>
    <WinTaskbar pitch={19} items={['orb', 'ie', 'chrome', 'folder', 'media', 'tray', 'vmm']} active={['tray', 'vmm']} clock={'10:15\n06/02/2013'} />
    <Tooltip>VMs and Services Details</Tooltip>
    <Heat id="vmm" box="218 214 390 267" spots={vmmHeat} clicks={[[234, 420]]} />
  </Shot>
);

/* ---------- VMware View Administrator ---------- */
const BrowserBar = styled.header`
  height: 15px;
  display: flex;
  align-items: center;
  gap: 2px;
  padding: 5px 2px 0;
  background: linear-gradient(90deg, #5f7fae, #2c58a0 25%, #2149a0 45%, #7295c8);
`;
const RoundButton = styled.button`
  display: grid;
  place-items: center;
  width: ${(p) => p.$s}px;
  height: ${(p) => p.$s}px;
  border-radius: 50%;
  color: #fff;
  background: ${(p) => (p.$dim ? '#7994bd' : '#29a4e0')};
`;
const Address = styled.div`
  display: flex;
  align-items: center;
  gap: 2px;
  width: 27%;
  height: 7px;
  overflow: hidden;
  padding: 0 2px;
  margin-left: 2px;
  background: #e3899f;
  input { flex: 1; width: 0; color: #733; }
`;
const BrowserTab = styled.button`
  display: flex;
  align-items: center;
  gap: 2px;
  width: 16%;
  height: 8px;
  padding: 0 2px;
  background: #c4d3ea;
`;
const AppBar = styled.div`
  height: 12px;
  display: flex;
  align-items: center;
  gap: 4px;
  padding-left: 4px;
  color: #a9a9a9;
  font-size: 6px;
  background: linear-gradient(#474747, #262626);
`;
const AdminBody = styled.div`
  display: grid;
  grid-template-columns: 72fr 365fr;
  flex: 1;
  min-height: 229px;
  background: #b3b3b3;
`;
const SideBar = styled.aside`
  border-right: 2px solid #999;
  min-width: 0;
  overflow: hidden;
`;
const Summary = styled.ul`
  height: 38px;
  padding: 1px 4px 0 5px;
  border-bottom: 1px solid #999;
  li { display: flex; align-items: center; justify-content: space-between; height: 5px; font-weight: 700; font-size: 3px; }
  li:first-child { height: 6px; font-weight: 400; color: #666; }
  b { color: #246fb5; }
`;
const Light = styled.i`width: 5px; height: 4px; background: ${(p) => p.$c};`;
const AdminNav = styled.ul`
  display: grid;
  grid-auto-rows: 1fr;
  height: 109px;
  margin-top: 1px;
`;
const AdminItem = styled.li`
  display: flex;
  align-items: center;
  gap: 1px;
  color: #333;
  padding-left: ${(p) => p.$in}px;
  background: ${(p) => (p.$on ? '#4f9fce' : 'none')};
`;
const Pools = styled.div`
  display: flex;
  flex-direction: column;
  min-width: 0;
`;
const PoolsTitle = styled.h2`height: 10px; line-height: 9px; padding-left: 5px; font-size: 5px; font-weight: 700; background: #a5a5a5;`;
const PoolTools = styled.div`
  display: flex;
  align-items: center;
  gap: 5px;
  height: 12px;
  padding-left: 9px;
  border-bottom: 1px solid #999;
`;
const GreyButton = styled.button`
  flex: 0 0 ${(p) => p.$w}px;
  height: 6px;
  line-height: 4px;
  border: 1px solid #8d8d8d;
  border-radius: 1px;
  background: #bcbcbc;
  font-weight: ${(p) => (p.$bold ? 700 : 400)};
  &:disabled { color: #949494; border-color: #a5a5a5; }
`;
const FilterRow = styled.div`
  display: flex;
  align-items: center;
  gap: 5px;
  height: 13px;
  padding: 0 5px 0 8px;
  background: #adadad;
  input { width: 45px; height: 6px; background: #c5c5c5; border: 1px solid #8d8d8d; }
  select { width: 54px; height: 6px; line-height: 4px; font-size: 4px; padding-left: 2px; appearance: none; background: linear-gradient(90deg, #bfbfbf 88%, #a3a3a3 88%); border: 1px solid #8d8d8d; }
  svg { color: #2f83cc; }
`;
const PoolGrid = styled.div`
  flex: 1;
  display: grid;
  grid-template-columns: 43fr 42fr 43fr 43fr 27fr 52fr 20fr 21fr 73fr;
  margin-right: 1px;
  border-bottom: 4px solid #a5a5a5;
  span { height: 100%; border-right: 1px solid #999; line-height: 5px; text-align: center; color: #34586f; background: linear-gradient(#b5b5b5 5px, transparent 5px); overflow: hidden; }
  background: repeating-linear-gradient(#b2b2b2 0 6px, #a6a6a6 6px 12px);
`;
const Modal = styled.section`
  position: absolute;
  top: 63px;
  left: 19%;
  right: 19%;
  height: 156px;
  display: grid;
  grid-template-rows: 8px 136px 11px;
  border: 1px solid #777;
  border-radius: 3px;
  overflow: hidden;
  box-shadow: 2px 4px 8px rgba(0, 0, 0, .6);
  background: #ccc;
`;
const ModalHead = styled.header`
  display: flex;
  justify-content: space-between;
  align-items: center;
  padding: 0 4px 0 3px;
  color: #eee;
  background: linear-gradient(#686868, #3f3f3f);
  button { width: 4px; height: 4px; line-height: 4px; border-radius: 50%; background: #fff; color: #444; }
`;
const ModalBody = styled.div`
  display: grid;
  grid-template-columns: 61fr 133fr 78fr;
  background: #fff;
`;
const PoolSteps = styled.ul`
  display: grid;
  grid-auto-rows: 5px;
  align-content: start;
  background: #f0f0f0;
`;
const PoolStep = styled.li`
  padding-left: ${(p) => (p.$head ? 4 : 7)}px;
  line-height: 5px;
  color: ${(p) => (p.$head || p.$on ? '#222' : '#aaa')};
  font-weight: ${(p) => (p.$head ? 700 : 400)};
  background: ${(p) => (p.$on ? '#8fb8ec' : 'none')};
`;
const Types = styled.fieldset`
  border: 0;
  margin: 0;
  padding: 0;
  min-width: 0;
  border-right: 1px solid #ccc;
  h3 { height: 5px; line-height: 5px; padding-left: 4px; background: #ddd; }
`;
const TypeOption = styled.label`
  display: flex;
  align-items: center;
  gap: 3px;
  height: 16px;
  padding-left: 5px;
  input { appearance: none; width: 4px; height: 4px; border: 1px solid #aaa; border-radius: 50%; }
`;
const Info = styled.aside`
  padding: 0 3px;
  background: #f1f1f1;
  border-top: 4px solid #ddd;
  h3 { font-weight: 700; line-height: 7px; }
  p { color: #555; line-height: 4px; height: 58px; padding-top: 1px; white-space: pre; }
`;
const Feature = styled.li`
  display: flex;
  align-items: center;
  height: 6px;
  color: #555;
  span { padding-left: ${(p) => (p.$on ? 4 : 8)}px; }
  & + & { margin-top: ${(p) => (p.$gap ? 1 : 0)}px; }
`;
const ModalFoot = styled.footer`
  display: flex;
  justify-content: flex-end;
  align-items: center;
  gap: 2px;
  padding-right: 3px;
`;

const adminNav = [
  [6, 'screen', 'Dashboard'], [6, 'user', 'Users and Groups'], [2, null, '▾ Inventory'], [10, 'screen', 'Pools', true], [10, 'disc', 'Desktops'],
  [10, 'list', 'Persistent Disks'], [10, 'shell', 'ThinApps'], [2, null, '▾ Monitoring'], [10, 'redbox', 'Events'], [10, 'user', 'Remote Sessions'],
  [10, 'user', 'Local Sessions'], [2, null, '▾ Policies'], [10, 'list', 'Global Policies'], [2, null, '▾ View Configuration'], [11, null, 'Servers'],
  [11, null, 'Product Licensing and Usage'], [11, null, 'Global Settings'], [11, null, 'Registered Desktop Sources'], [11, null, 'Administrators'],
  [11, null, 'ThinApp Configuration'], [11, null, 'Event Configuration'],
];
const poolSteps = ['Pool Definition', 'Type', 'User Assignment', 'vCenter Server', 'Setting', 'Pool Identification', 'Pool Settings', 'Provisioning Settings', 'vCenter Settings', 'Advanced Storage Options', 'Guest Customization', 'Ready to Complete'];
const features = [['vCenter virtual machines', 1], ['Physical computers, blade PCs', 0], ['Microsoft Terminal Server', 0], ['View Composer', 1], ['Local Mode', 1], ['PCoIP', 1], ['Persona management', 1]];

const ViewAdmin = () => (
  <Shot $area="4 / 1 / 6 / 4" $z={2} $font='4px/5px "DejaVu Sans", sans-serif'>
    <BrowserBar>
      <RoundButton $s={9} aria-label="Back"><Glyph name="back" size={6} /></RoundButton>
      <RoundButton $s={6} $dim aria-label="Forward"><Glyph name="forward" /></RoundButton>
      <Address><Glyph name="logo" /><input aria-label="Address" defaultValue="https://vmtgcomposer/admin/" /><Glyph name="zoom" /><Glyph name="warnred" /><span>Certifica...</span><Glyph name="refresh" /><span>✕</span></Address>
      <BrowserTab><Glyph name="logo" />VMware View Administrator</BrowserTab>
    </BrowserBar>
    <AppBar><Glyph name="logo" size={10} />VMware View Administrator</AppBar>
    <AdminBody>
      <SideBar>
        <Summary>
          <li>Updated 04/02/2013 14:36 <b><Glyph name="refresh" /></b></li>
          {['Remote Sessions', 'Local Sessions', 'Problem Desktops'].map((t) => <li key={t}>{t}<b>0</b></li>)}
          <li>Events<Spacer /><Glyph name="warnred" />&nbsp;<b>0</b>&nbsp;<Glyph name="warn" />&nbsp;<b>0</b></li>
          <li>System Health<Light $c="#177a26" /><Light $c="#c01818" /><Light $c="#dba51e" /><Light $c="#ccc" /></li>
          <li><span>&nbsp;</span><Spacer /><b>5&nbsp;&nbsp;&nbsp;1&nbsp;&nbsp;&nbsp;1&nbsp;&nbsp;&nbsp;0</b></li>
        </Summary>
        <AdminNav>{adminNav.map(([pad, g, t, on]) => <AdminItem key={t} $in={pad} $on={on}>{g && <Glyph name={g} />}<a href="#">{t}</a></AdminItem>)}</AdminNav>
      </SideBar>
      <Pools>
        <PoolsTitle>Pools</PoolsTitle>
        <PoolTools>
          <GreyButton $w={17} $bold>Add...</GreyButton><GreyButton $w={20} disabled>Edit...</GreyButton><GreyButton $w={22} disabled>Delete...</GreyButton><GreyButton $w={30} disabled>Entitlements...</GreyButton><GreyButton $w={27} $bold>▾ Status</GreyButton><GreyButton $w={24}>More</GreyButton>
        </PoolTools>
        <FilterRow>
          <b>Filter ▾</b><input aria-label="Filter" /><GreyButton $w={22}>Find</GreyButton><GreyButton $w={22}>Clear</GreyButton>
          <span />&nbsp;<label htmlFor="folder">Folder:</label><select id="folder" defaultValue="All"><option>All</option></select><Spacer /><Glyph name="refresh" size={5} />
        </FilterRow>
        <PoolGrid>{['ID', 'Display Name', 'Type', 'Source', '', 'User Assignment', 'Enabled', 'State', 'Sessions'].map((c, i) => <span key={i}>{c}</span>)}</PoolGrid>
      </Pools>
    </AdminBody>
    <WinTaskbar pitch={21} items={['orb', 'ie', 'folder', 'media', 'chrome', 'vm']} active={['ie', 'vm']} clock={'14:39\n04/02/2013'} />
    <Modal>
      <ModalHead>Add Pool<button aria-label="Help">?</button></ModalHead>
      <ModalBody>
        <PoolSteps>{poolSteps.map((s, i) => <PoolStep key={s} $head={i === 0 || i === 4} $on={i === 1}>{s}</PoolStep>)}</PoolSteps>
        <Types>
          <h3>Type</h3>
          {['Automated Pool', 'Manual Pool', 'Terminal Services Pool'].map((t, i) => <TypeOption key={t}><Glyph name={i === 2 ? 'server' : 'screen'} size={8} w={9} /><input type="radio" name="pool" defaultChecked={i === 0} />{t}</TypeOption>)}
        </Types>
        <Info>
          <h3>Automated Pool</h3>
          <p>{'An automated pool uses a vCenter\nServer template or virtual machine\nsnapshot to generate new desktops.\nThe desktops can be created when\nthe pool is created or generated on\ndemand based on pool usage.'}</p>
          <h3>Supported Features</h3>
          <ul>{features.map(([t, on], i) => <Feature key={t} $on={on} $gap={i % 2 === 0}>{!!on && <Glyph name="check" />}<span>{t}</span></Feature>)}</ul>
        </Info>
      </ModalBody>
      <ModalFoot><PushButton $w={20}>&lt; Back</PushButton><PushButton $w={18}>Next</PushButton><PushButton $w={18}>Cancel</PushButton></ModalFoot>
    </Modal>
    <Heat id="view" box="0 432 437 267" spots={viewHeat} clicks={viewClicks} pointer="200 502" />
  </Shot>
);

export default function App() {
  return (
    <>
      <GlobalStyle />
      <Board><Studio /><Manager /><ViewAdmin /></Board>
    </>
  );
}
